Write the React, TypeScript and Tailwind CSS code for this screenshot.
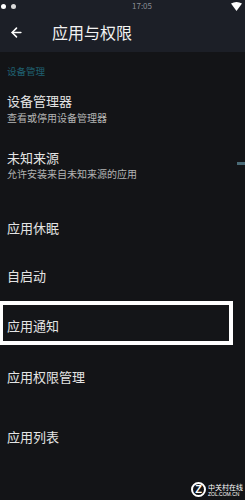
import { ArrowLeft } from "lucide-react";

const font = { fontFamily: '"Noto Sans CJK SC", "Noto Sans", sans-serif' };

const SingleRow = ({ label, className }: { label: string; className: string }) => (
  <div className={`flex items-center px-[7px] ${className}`}>
    <div className="text-[13px] leading-[16px] text-[#e4e4e4]">{label}</div>
  </div>
);

const App = () => {
  return (
    <div className="relative w-[245px] h-[500px] overflow-hidden bg-[#131417] leading-none" style={font}>
      {/* status bar */}
      <div className="flex h-[12px] items-center bg-[#1c1f27] px-[1px]">
        <div className="flex gap-[5px]">
          <span className="h-[5px] w-[5px] rounded-full bg-white" />
          <span className="h-[5px] w-[5px] rounded-full bg-[#d8d8d8]" />
        </div>
        <span className="ml-[116px] text-[8px] leading-[10px] text-[#8a8d94]">17:05</span>
        <svg className="ml-auto mr-[2px]" width="11" height="9" viewBox="0 0 11 9">
          <path d="M0 1.5 Q5.5 -1.5 11 1.5 L5.5 9 Z" fill="#ffffff" />
        </svg>
      </div>

      {/* header */}
      <div className="flex h-[40px] items-center bg-[#1c1f27]">
        <ArrowLeft className="ml-[9px] text-white" size={15} strokeWidth={2.5} />
        <h1 className="ml-[28px] text-[16px] leading-[20px] text-[#f2f2f2]">应用与权限</h1>
      </div>

      {/* section */}
      <div className="h-[34px] px-[7px] pt-[13px]">
        <div className="text-[9.5px] leading-[12px] text-[#1f6070]">设备管理</div>
      </div>

      <div className="h-[46px] px-[7px] pt-[7px]">
        <div className="text-[13px] leading-[16px] text-[#e4e4e4]">设备管理器</div>
        <div className="mt-[3px] text-[10px] leading-[12px] text-[#b4b4b4]">查看或停用设备管理器</div>
      </div>

      <div className="flex h-[72px] pl-[7px] pt-[18px]">
        <div>
          <div className="text-[13px] leading-[16px] text-[#e4e4e4]">未知来源</div>
          <div className="mt-[2px] text-[10px] leading-[12px] text-[#b4b4b4]">允许安装来自未知来源的应用</div>
        </div>
        <div className="ml-auto mt-[12px] h-[3px] w-[8px] bg-[#4a6a76]" />
      </div>

      <SingleRow label="应用休眠" className="h-[48px]" />
      <SingleRow label="自启动" className="h-[48px]" />

      <div className="ml-[-1px] mt-[1px] flex h-[44px] w-[234px] items-center border-[4px] border-white bg-[#141518] pl-[4px] pt-[5px]">
        <div className="text-[13px] leading-[16px] text-[#e4e4e4]">应用通知</div>
      </div>

      <div className="h-[64px] px-[7px] pt-[24px]">
        <div className="text-[13px] leading-[16px] text-[#e4e4e4]">应用权限管理</div>
      </div>

      <SingleRow label="应用列表" className="h-[56px]" />

      {/* watermark */}
      <div className="absolute bottom-[3px] right-[2px] flex items-center gap-[2px]">
        <div className="flex h-[15px] w-[15px] items-center justify-center rounded-full border-[2px] border-white">
          <span className="text-[11px] font-bold leading-[11px] text-white" style={{ fontFamily: '"Liberation Sans", sans-serif' }}>Z</span>
        </div>
        <div className="flex flex-col">
          <span className="text-[7px] leading-[8px] text-white">中关村在线</span>
          <span className="text-[5px] leading-[6px] text-white" style={{ fontFamily: '"Liberation Sans", sans-serif' }}>ZOL.COM.CN</span>
        </div>
      </div>
    </div>
  );
};

export default App;
